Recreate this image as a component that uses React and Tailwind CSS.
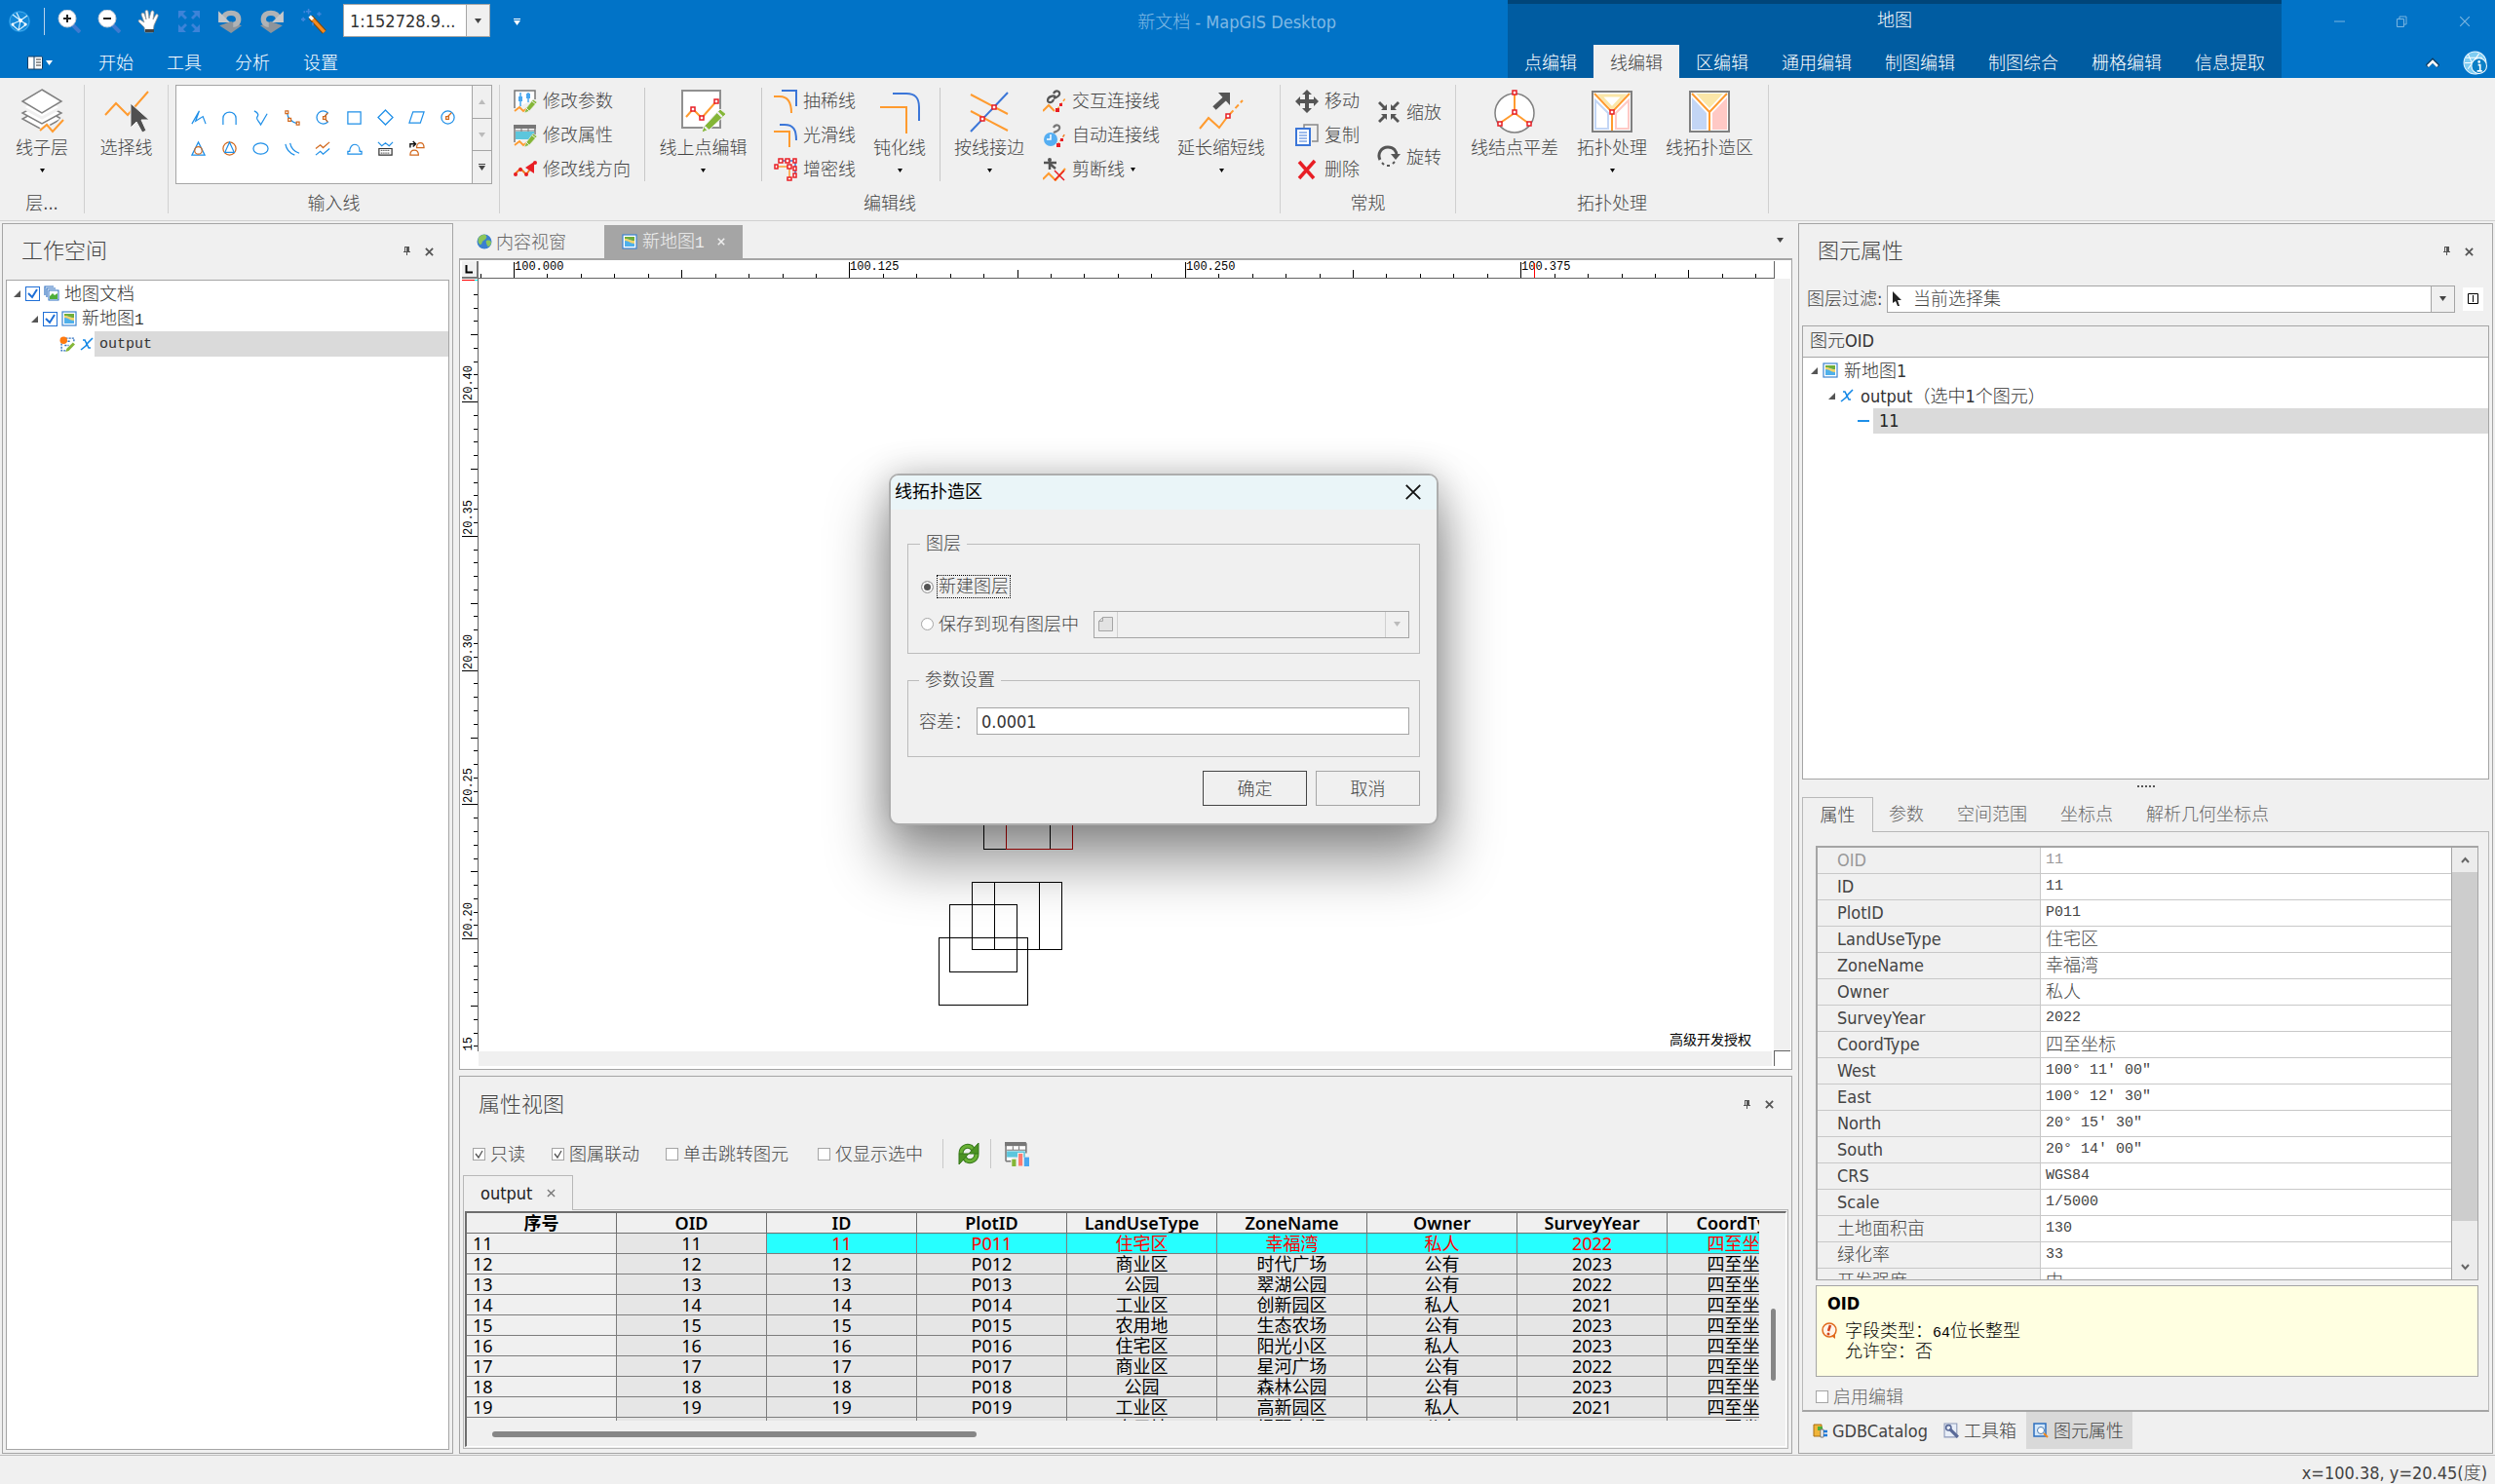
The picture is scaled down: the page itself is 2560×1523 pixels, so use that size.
import React from "react";

const TICK_X = Array.from({ length: 60 }, (_, i) => i - 1);
const TICK_Y = Array.from({ length: 70 }, (_, i) => i - 8);

/* ---------- small shared pieces ---------- */

function Svg({ size = 24, box = 24, className = "", children }) {
  return (
    <svg
      width={size}
      height={size}
      viewBox={`0 0 ${box} ${box}`}
      fill="none"
      className={"shrink-0 " + className}
      aria-hidden="true"
    >
      {children}
    </svg>
  );
}

function Down({ className = "text-[#444]" }) {
  return (
    <svg width="7" height="5" viewBox="0 0 7 5" className={"shrink-0 " + className} aria-hidden="true">
      <path d="M0 0h7L3.500 5z" fill="currentColor" />
    </svg>
  );
}

function Tiny() {
  return (
    <svg width="5" height="4" viewBox="0 0 5 4" className="shrink-0" aria-hidden="true">
      <path d="M0 0h5L2.500 4z" fill="#000" />
    </svg>
  );
}

function Pin() {
  return (
    <svg width="7" height="10" viewBox="0 0 7 10" aria-hidden="true">
      <path d="M1 0h5v5h1v1H0V5h1zM3 6h1v3H3z" fill="#555" />
      <path d="M2 1h1v4H2z" fill="#f0f0f0" />
    </svg>
  );
}

function Cross({ size = 9, color = "#555", width = 2 }) {
  return (
    <svg width={size} height={size} viewBox="0 0 10 10" aria-hidden="true">
      <path d="M1 1l8 8M9 1l-8 8" stroke={color} strokeWidth={width} />
    </svg>
  );
}

function PanelHeader({ title, className }) {
  return (
    <div className={"flex shrink-0 items-center text-[#444] " + className}>
      <h2 className="flex-1 text-[22px] leading-7">{title}</h2>
      <button className="mr-[15px]" aria-label="固定">
        <Pin />
      </button>
      <button aria-label="关闭">
        <Cross />
      </button>
    </div>
  );
}

/* ---------- icon drawings ---------- */

const orange = "#ff9b2f";
const blue = "#1e8fe8";
const grey = "#555";

function Pencil({ x = 12, y = 9 }) {
  return (
    <g transform={`translate(${x} ${y})`}>
      <path d="M-1 15l2-5 7-9 4 3-8 9z" fill="#84b637" stroke="#f0f0f0" strokeWidth=".6" />
      <path d="M7 3l4 3M1 10l3 3" stroke="#f0f0f0" strokeWidth="1" />
    </g>
  );
}

const I = {
  globe: (
    <Svg size={24}>
      <circle cx="12" cy="12" r="11" fill="#1488d8" />
      <circle cx="12" cy="12" r="10" stroke="#3fa9ec" />
      <path d="M5 5l8 6 7-5M13 11l-2 10M13 11L4 15M4 15l7 6 8-6-6-4M9 3l4 8" stroke="#d9f1ff" strokeWidth="1.2" />
      <circle cx="13" cy="11" r="2" fill="#fff" />
      <circle cx="5" cy="15" r="1.5" fill="#fff" />
      <circle cx="18" cy="15" r="1.5" fill="#fff" />
    </Svg>
  ),
  zoomIn: (
    <Svg>
      <path d="M15 15l8 8" stroke="#3f7bd0" strokeWidth="4" />
      <circle cx="10" cy="9" r="9" fill="#fff" stroke="#bcc7d4" />
      <path d="M6 9h8M10 5v8" stroke="#222" strokeWidth="2" />
    </Svg>
  ),
  zoomOut: (
    <Svg>
      <path d="M15 15l8 8" stroke="#3f7bd0" strokeWidth="4" />
      <circle cx="10" cy="9" r="9" fill="#fff" stroke="#bcc7d4" />
      <path d="M6 9h8" stroke="#222" strokeWidth="2" />
    </Svg>
  ),
  hand: (
    <Svg>
      <path
        d="M8 23l-1-5-6-6c0-2 2-2 3-1l3 2-3-8c0-2 2-2 3-1l2 6-1-8c0-2 3-2 3 0l1 7 2-7c1-2 3-1 3 1l-1 7 3-5c1-1 3 0 2 2l-4 9-1 7z"
        fill="#fff"
        stroke="#999"
        strokeWidth=".8"
      />
      <path d="M8 23h9v-3H8z" fill="#444" />
    </Svg>
  ),
  expand: (
    <Svg>
      <path
        d="M1 1h8L6 4l4 4-2 2-4-4-3 3zM23 1v8l-3-3-4 4-2-2 4-4-3-3zM1 23v-8l3 3 4-4 2 2-4 4 3 3zM23 23h-8l3-3-4-4 2-2 4 4 3-3z"
        fill="#3d83d8"
      />
    </Svg>
  ),
  undo: (
    <Svg size={26}>
      <path d="M2 16l11-4 10 4-10 7z" fill="#8d949b" />
      <path d="M6 10c0-4 3-6 7-6s7 2 7 6-3 5-5 5" stroke="#b0b3b6" strokeWidth="5" />
      <path d="M1 2v11h11z" fill="#c4c7ca" />
    </Svg>
  ),
  redo: (
    <Svg size={26}>
      <path d="M1 16l10-4 11 4-11 7z" fill="#8d949b" />
      <path d="M18 10c0-4-3-6-7-6S4 6 4 10s3 5 5 5" stroke="#b0b3b6" strokeWidth="5" />
      <path d="M23 2v11H12z" fill="#c4c7ca" />
    </Svg>
  ),
  wand: (
    <Svg size={26}>
      <path d="M9 8l13 14" stroke="#7a4a10" strokeWidth="5" />
      <path d="M9 8l13 14" stroke="#f58a1f" strokeWidth="3" />
      <path d="M8 7l3 3" stroke="#fff" strokeWidth="3" />
      <path d="M7 0v5M4.500 2.500h5M2 8v4M0 10h4M17 3v4M15 5h4M3 2v2M11 13v3" stroke="#3f86dd" strokeWidth="1.500" />
    </Svg>
  ),
  appMenu: (
    <Svg size={16} box={16}>
      <rect x="0.500" y="2" width="15" height="13" rx="1" fill="#fff" stroke="#123e66" />
      <path d="M7 2v13" stroke="#123e66" />
      <path d="M9 5h5M9 8h5M9 11h5" stroke="#333" />
    </Svg>
  ),
  info: (
    <Svg size={25}>
      <circle cx="12" cy="12" r="11" fill="#7fcdf2" stroke="#e8f7ff" />
      <path d="M3 7h16M2 12h10M5 3l8 18M16 3L5 18" stroke="#fff" strokeWidth="1" />
      <circle cx="16" cy="15" r="7.500" fill="#0b7fc6" stroke="#fff" />
      <path d="M15 14h2v6M14 20h5" stroke="#fff" strokeWidth="1.600" />
      <circle cx="16" cy="11" r="1.300" fill="#fff" />
    </Svg>
  ),
  layers: (
    <Svg size={46} box={46}>
      <path d="M23 20l20 11-20 11L3 31z" fill="#fff" stroke="#808080" strokeWidth="1.500" />
      <path d="M23 14l20 11-20 11L3 25z" fill="#fff" stroke="#808080" strokeWidth="1.500" />
      <path d="M23 8l20 11-20 11L3 19z" fill="#fff" stroke="#f0f0f0" strokeWidth="3" />
      <path d="M23 1l20 12-20 12L3 13z" fill="#fff" stroke="#808080" strokeWidth="1.500" />
      <path d="M20 45l8-7 6 5 11-12" stroke="#f0f0f0" strokeWidth="5" />
      <path d="M21 43l7-6 6 7 11-12" stroke={orange} strokeWidth="2" />
    </Svg>
  ),
  selectLine: (
    <Svg size={46} box={46}>
      <path d="M1 27l11-12 12 12L45 3" stroke={orange} strokeWidth="2" />
      <path d="M27 15v25l6-6 6 11 4-2-5-11h8z" fill="#505050" stroke="#f0f0f0" />
    </Svg>
  ),
  params: (
    <Svg>
      <path d="M1 19V1h21v9" stroke="#777" strokeWidth="1.500" fill="#fff" />
      <path d="M7 3v14M15 3v10" stroke="#4aa8f0" strokeWidth="1.500" />
      <path d="M5 7h4v5H5zM13 4h4v5h-4z" fill="#4aa8f0" />
      <path d="M1 22l5-4 4 4 4-3" stroke={orange} strokeWidth="1.800" />
      <Pencil x={12} y={9} />
    </Svg>
  ),
  attrs: (
    <Svg>
      <path d="M1 19V2h21v9" stroke="#777" strokeWidth="1.500" fill="#fff" />
      <path d="M0 1h23v4H0z" fill="#777" />
      <path d="M2 8h19v8H2z" fill="#5cc6dc" />
      <path d="M2 7h20M8 5v3M15 5v3" stroke="#777" />
      <path d="M1 22l5-4 4 4 4-3" stroke={orange} strokeWidth="1.800" />
      <Pencil x={12} y={9} />
    </Svg>
  ),
  direction: (
    <Svg>
      <path d="M1 17l6-6 6 6 8-11" stroke="#f07a20" strokeWidth="2" />
      <path d="M21 4v12l-9-6z" fill="#e81e25" />
      <circle cx="2" cy="17" r="2" fill="#e81e25" />
      <circle cx="7" cy="12" r="2" fill="#e81e25" />
      <circle cx="13" cy="17" r="2" fill="#e81e25" />
      <circle cx="22" cy="5" r="2" fill="#e81e25" />
    </Svg>
  ),
  pointEdit: (
    <Svg size={46} box={46}>
      <rect x="1" y="2" width="39" height="38" fill="#fff" stroke="#909090" strokeWidth="2" />
      <path d="M5 29l7-8 9 9 15-17" stroke={orange} strokeWidth="2" />
      <g fill="#fff" stroke="#e81e25" strokeWidth="1.500">
        <rect x="10" y="19" width="4" height="4" />
        <rect x="19" y="28" width="4" height="4" />
        <rect x="34" y="11" width="4" height="4" />
      </g>
      <path d="M21 45l2-6L40 21l6 5-17 16z" fill="#84b637" stroke="#f0f0f0" />
      <path d="M37 24l5 5M24 39l4 4" stroke="#f0f0f0" strokeWidth="2" />
    </Svg>
  ),
  thin: (
    <Svg>
      <path d="M8 1h15v16" stroke="#3b76d8" strokeWidth="2" />
      <path d="M0 7h6c8 0 12 5 12 17" stroke={orange} strokeWidth="2" />
    </Svg>
  ),
  smooth: (
    <Svg>
      <path d="M6 1h5c9 0 12 5 12 16" stroke="#3b76d8" strokeWidth="2" />
      <path d="M0 8h16v16" stroke={orange} strokeWidth="2" />
    </Svg>
  ),
  dense: (
    <Svg>
      <path d="M7 3h15v15" stroke="#3b76d8" strokeWidth="1.500" />
      <path d="M2 9h14v13" stroke={orange} strokeWidth="1.500" />
      <g fill="#fff" stroke="#e81e25" strokeWidth="1.500">
        <rect x="5" y="1" width="4" height="4" />
        <rect x="12" y="1" width="4" height="4" />
        <rect x="20" y="1" width="3" height="4" />
        <rect x="1" y="7" width="3" height="4" />
        <rect x="14" y="7" width="4" height="4" />
        <rect x="20" y="9" width="3" height="4" />
        <rect x="20" y="16" width="3" height="4" />
        <rect x="14" y="20" width="4" height="3" />
      </g>
    </Svg>
  ),
  blunt: (
    <Svg size={46} box={46}>
      <path d="M16 5h14c9 0 13 4 13 14v14" stroke="#3b76d8" strokeWidth="2" />
      <path d="M3 19h27v27" stroke={orange} strokeWidth="2" />
    </Svg>
  ),
  joinEdge: (
    <Svg size={46} box={46}>
      <path d="M42 4L4 44" stroke="#3b76d8" strokeWidth="2" />
      <path d="M4 6l38 20M4 23l38 20" stroke={orange} strokeWidth="2" />
      <g fill="#fff" stroke="#e81e25" strokeWidth="1.500">
        <rect x="26" y="17" width="4" height="4" />
        <rect x="14" y="29" width="4" height="4" />
      </g>
    </Svg>
  ),
  linkInteractive: (
    <Svg>
      <path d="M11 4c2-4 7-3 6 1-1 3-4 3-6 4M13 8c-1-3-8-1-8 3 0 3 5 3 6-1" stroke={grey} strokeWidth="2.200" />
      <path d="M0 22l6-6 6 6" stroke={orange} strokeWidth="2" />
      <path d="M15 20l8-11" stroke={orange} strokeWidth="1.500" strokeDasharray="3 2" />
      <path d="M13 19h4v4h-4zM17 14h3v3h-3z" fill="#e81e25" />
    </Svg>
  ),
  linkAuto: (
    <Svg>
      <path d="M11 4c2-4 7-3 6 1-1 3-4 3-6 4" stroke="#777" strokeWidth="2.200" />
      <circle cx="8" cy="16" r="7" fill="#55aef2" />
      <path d="M8 11v5H4" stroke="#fff" strokeWidth="1.500" />
      <path d="M15 22l8-12" stroke="#f07a20" strokeWidth="1.500" strokeDasharray="3 2" />
      <path d="M14 20h4v4h-4zM18 15h3v3h-3z" fill="#e81e25" />
    </Svg>
  ),
  cut: (
    <Svg>
      <path d="M7 2v10M1 5h13M7 6l6 5" stroke={grey} strokeWidth="2.500" />
      <circle cx="7" cy="2" r="2" fill={grey} />
      <path d="M0 22l6-6 7 7 10-12" stroke={orange} strokeWidth="2" />
      <path d="M12 13l10 10M22 13L12 23" stroke="#e81e25" strokeWidth="1.500" />
    </Svg>
  ),
  extend: (
    <Svg size={46} box={46}>
      <path d="M16 20L28 9" stroke={grey} strokeWidth="5" />
      <path d="M20 4h12v13z" fill={grey} />
      <path d="M1 41l9-11 11 10 9-12" stroke={orange} strokeWidth="2" />
      <path d="M32 26l13-14" stroke={orange} strokeWidth="2" strokeDasharray="5 3" />
      <rect x="28" y="26" width="4" height="4" fill="#fff" stroke="#e81e25" strokeWidth="1.500" />
    </Svg>
  ),
  move: (
    <Svg>
      <path d="M12 0l5 5h-3v5h5V7l5 5-5 5v-3h-5v5h3l-5 5-5-5h3v-5H5v3l-5-5 5-5v3h5V5H7z" fill={grey} />
    </Svg>
  ),
  copy: (
    <Svg>
      <path d="M9 5V1h14v17h-6" stroke="#888" strokeWidth="1.500" />
      <path d="M1 5h14v17H1z" fill="#fff" stroke="#3b76d8" strokeWidth="2" />
      <path d="M4 9h8M4 12h8M4 15h8M4 18h8" stroke="#3b76d8" />
    </Svg>
  ),
  del: (
    <Svg>
      <path d="M4 4l15 17M20 3L4 21" stroke="#e81e25" strokeWidth="3.500" />
    </Svg>
  ),
  shrink: (
    <Svg>
      <path
        d="M1 3l2-2 5 5 2-2v6H4l2-2zM23 3l-2-2-5 5-2-2v6h6l-2-2zM1 21l2 2 5-5 2 2v-6H4l2 2zM23 21l-2 2-5-5-2 2v-6h6l-2 2z"
        fill={grey}
      />
    </Svg>
  ),
  rotate: (
    <Svg>
      <path d="M3 15C0 9 4 2 11 2c6 0 9 4 9 9" stroke={grey} strokeWidth="3" />
      <path d="M14 9h10l-5 6z" fill={grey} />
      <path d="M5 18l2 2M10 21h3M16 19l2-2" stroke={grey} strokeWidth="2" />
    </Svg>
  ),
  nodeAdjust: (
    <Svg size={46} box={46}>
      <circle cx="23" cy="25" r="20" fill="#fff" stroke="#808080" strokeWidth="1.500" />
      <path d="M23 5v20L7 36M23 25l15 11" stroke={orange} strokeWidth="2" />
      <g fill="#fff" stroke="#e81e25" strokeWidth="1.500">
        <rect x="21" y="2" width="4" height="4" />
        <rect x="21" y="22" width="4" height="4" />
        <rect x="6" y="34" width="4" height="4" />
        <rect x="36" y="34" width="4" height="4" />
      </g>
    </Svg>
  ),
  topo: (
    <Svg size={46} box={46}>
      <rect x="3" y="3" width="40" height="41" fill="#fff" stroke="#808080" strokeWidth="2" />
      <path d="M11 7h24L23 20z" stroke="#fbe7a8" strokeWidth="3" />
      <path d="M40 12v29H27V25z" stroke="#ffc9c5" strokeWidth="2" />
      <path d="M6 12v29h13V25z" stroke="#c3d6f5" strokeWidth="2" />
      <path d="M5 5l18 19L41 5M23 24v19" stroke={orange} strokeWidth="2" />
      <rect x="21" y="22" width="4" height="4" fill="#fff" stroke="#e81e25" strokeWidth="1.500" />
    </Svg>
  ),
  topoArea: (
    <Svg size={46} box={46}>
      <rect x="3" y="3" width="40" height="41" fill="#fff" stroke="#808080" strokeWidth="2" />
      <path d="M9 5h28L23 20z" fill="#fbe7a8" />
      <path d="M5 9v33h15V25z" fill="#c3d6f5" />
      <path d="M41 9v33H26V25z" fill="#ffc9c5" />
      <path d="M5 5l18 19L41 5M23 24v19" stroke={orange} strokeWidth="2" />
    </Svg>
  ),
  map: (
    <Svg size={16} box={16}>
      <rect x="1" y="1" width="14" height="14" fill="#fff" stroke="#3d84d0" strokeWidth="1.200" />
      <path d="M3 3h10v10H3z" fill="#4fb0ea" />
      <path d="M3 3h10v4C9 7 8 5 3 5z" fill="#6fae3a" />
      <path d="M3 5c5 0 5 2 10 2v3C8 10 8 7 3 7z" fill="#f2d36b" />
    </Svg>
  ),
  mapDoc: (
    <Svg size={16} box={16}>
      <path d="M1 10V1h9M3 12V3h9" stroke="#2d6fc0" strokeWidth="1.200" />
      <rect x="5" y="5" width="10" height="10" fill="#fff" stroke="#2d6fc0" />
      <path d="M6 14v-3l3-3 2 2 3-2v6z" fill="#4fae3a" />
    </Svg>
  ),
  line: (
    <Svg size={14} box={14}>
      <path d="M13 1L8 6l-2 3-5 4M3 3h2l2 4 2 4h2" stroke="#1287e6" strokeWidth="1.600" />
    </Svg>
  ),
  editing: (
    <Svg size={17} box={16}>
      <path d="M6 2h8v4M2 7v7h5M5 5h5M5 9h4" stroke="#2d6fc0" strokeWidth="1.300" strokeDasharray="2 1" />
      <circle cx="4" cy="4" r="3.500" fill="#ff7a10" />
      <path d="M6 15l1-3 6-6 2 2-6 6z" fill="#84b637" />
    </Svg>
  ),
  earth: (
    <Svg size={16} box={16}>
      <circle cx="8" cy="8" r="7.500" fill="#3a7fd0" />
      <path d="M2 4c3-4 7-4 8-2s-1 4-3 5-1 4-3 4S1 7 2 4zM10 7c3-1 5 0 5 2s-2 4-3 4-3-5-2-6z" fill="#8cc65a" />
    </Svg>
  ),
};

/* Drawings in the line-input gallery */
const o = "#d2691e";
const GALLERY = [
  <path d="M1 15L9 1 5 12l8-5 3 8" stroke={blue} />,
  <path d="M1 16V9c0-9 14-9 14 0v7" stroke={blue} />,
  <path d="M1 1c6 3 4 5 3 7s2 4 4 8l7-12" stroke={blue} />,
  <g>
    <path d="M3 3c0 6 4 10 12 12" stroke={blue} />
    <path d="M1 1h3v3H1zM4 9h3v3H4zM13 13h3v3h-3z" fill="#fff" stroke={o} />
  </g>,
  <g>
    <path d="M13 3a7 7 0 1 0 0 10L9 8z" stroke={blue} />
    <path d="M13 3L9 8l4 5" stroke={o} />
    <path d="M8 7h3v3H8z" fill="#fff" stroke={o} />
  </g>,
  <path d="M1 2h14v13H1z" stroke={blue} />,
  <path d="M8 0l8 8-8 8-8-8z" stroke={blue} />,
  <path d="M4 2h12l-4 12H0z" stroke={blue} />,
  <g>
    <circle cx="8" cy="8" r="7" stroke={blue} />
    <path d="M7 8l5-5" stroke={o} />
    <path d="M6 7h3v3H6z" fill="#fff" stroke={o} />
  </g>,
  <g>
    <path d="M8 1l7 14H1z" stroke={blue} />
    <circle cx="8" cy="10" r="4" stroke={o} />
  </g>,
  <g>
    <circle cx="8" cy="8" r="7" stroke={o} />
    <path d="M8 1l5 11H3z" stroke={blue} />
  </g>,
  <ellipse cx="8" cy="8" rx="8" ry="6" stroke={blue} />,
  <path d="M1 3c1 6 5 10 10 12M6 2c1 5 4 9 10 11" stroke={blue} />,
  <g>
    <path d="M0 8l5-4 3 3 7-6" stroke={o} />
    <path d="M0 15l5-4 3 3 7-6" stroke={blue} />
  </g>,
  <path d="M1 14v-3h2c0-10 11-10 11 0h2v3z" stroke={blue} />,
  <g>
    <path d="M0 1l4 4 4-3 4 3 4-4" stroke={blue} />
    <path d="M1 8h14v7H1z" stroke="#333" />
    <path d="M3 10h10M3 13h10" stroke="#333" strokeDasharray="1 1" />
  </g>,
  <g>
    <path d="M1 7V3h5M4 0l3 3-3 3" stroke="#111" strokeWidth="1.500" />
    <path d="M8 7c0-7 8-7 8 0zM1 15c0-7 9-7 9 0z" stroke={o} />
  </g>,
];

/* ---------- ribbon ---------- */

function Big({ icon, label, width, arrow = false }) {
  return (
    <button className={"flex h-[105px] shrink-0 flex-col items-center pt-1 " + width}>
      {icon}
      <span className="whitespace-nowrap leading-[30px]">{label}</span>
      {arrow && (
        <span className="pt-[6px]">
          <Tiny />
        </span>
      )}
    </button>
  );
}

function Small({ icon, label, height = "h-[35px]", arrow = false }) {
  return (
    <button className={"flex items-center gap-[6px] whitespace-nowrap pb-[2px] " + height}>
      {icon}
      <span>{label}</span>
      {arrow && <Tiny />}
    </button>
  );
}

function Group({ label, width, children }) {
  return (
    <section className={"flex h-[132px] shrink-0 flex-col border-r border-[#d0d0d0] " + width}>
      <div className="flex h-[113px]">{children}</div>
      <div className="text-center leading-5">{label}</div>
    </section>
  );
}

function Sep() {
  return <div className="mt-[3px] h-24 w-px shrink-0 bg-[#c8c8c8]" />;
}

function Ribbon() {
  return (
    <div className="flex h-[147px] shrink-0 overflow-hidden border-b border-[#d0d0d0] pt-[7px] text-[18px] text-[#444]">
      <Group label="层..." width="w-[87px]">
        <Big icon={I.layers} label="线子层" width="w-[86px]" arrow />
      </Group>
      <Group label="" width="w-[86px]">
        <Big icon={I.selectLine} label="选择线" width="w-[85px]" />
      </Group>
      <Group label="输入线" width="w-[340px]">
        <div className="ml-[7px] flex h-[102px] w-[325px] border border-[#a5a5a5] bg-white">
          <div className="grid flex-1 grid-cols-9 grid-rows-2 pb-5 pl-[6px] pr-[9px] pt-4">
            {GALLERY.map((g, i) => (
              <button key={i} className="flex items-center justify-center">
                <svg width="17" height="17" viewBox="-1 -1 18 18" fill="none" strokeWidth="1.3" aria-hidden="true">
                  {g}
                </svg>
              </button>
            ))}
          </div>
          <div className="flex w-5 flex-col border-l border-[#a5a5a5] bg-[#f0f0f0]">
            <button className="flex flex-1 items-center justify-center border-b border-[#a5a5a5]" aria-label="上一行">
              <Down className="rotate-180 text-[#bbb]" />
            </button>
            <button className="flex flex-1 items-center justify-center border-b border-[#a5a5a5]" aria-label="下一行">
              <Down className="text-[#bbb]" />
            </button>
            <button className="flex flex-1 flex-col items-center justify-center gap-px" aria-label="展开">
              <span className="h-px w-[7px] bg-[#444]" />
              <Down />
            </button>
          </div>
        </div>
      </Group>
      <Group label="编辑线" width="w-[801px]">
        <div className="flex w-[148px] shrink-0 flex-col pl-[14px]">
          <Small icon={I.params} label="修改参数" />
          <Small icon={I.attrs} label="修改属性" />
          <Small icon={I.direction} label="修改线方向" />
        </div>
        <Sep />
        <Big icon={I.pointEdit} label="线上点编辑" width="w-[119px]" arrow />
        <Sep />
        <div className="flex w-[100px] shrink-0 flex-col pl-3">
          <Small icon={I.thin} label="抽稀线" />
          <Small icon={I.smooth} label="光滑线" />
          <Small icon={I.dense} label="增密线" />
        </div>
        <Big icon={I.blunt} label="钝化线" width="w-[82px]" arrow />
        <Sep />
        <Big icon={I.joinEdge} label="按线接边" width="w-[100px]" arrow />
        <div className="flex w-[133px] shrink-0 flex-col pl-[5px]">
          <Small icon={I.linkInteractive} label="交互连接线" />
          <Small icon={I.linkAuto} label="自动连接线" />
          <Small icon={I.cut} label="剪断线" arrow />
        </div>
        <Big icon={I.extend} label="延长缩短线" width="w-[110px]" arrow />
      </Group>
      <Group label="常规" width="w-[180px]">
        <div className="flex w-[90px] flex-col pl-[15px]">
          <Small icon={I.move} label="移动" />
          <Small icon={I.copy} label="复制" />
          <Small icon={I.del} label="删除" />
        </div>
        <div className="flex flex-col pl-[9px] pt-[6px]">
          <Small icon={I.shrink} label="缩放" height="h-[46px]" />
          <Small icon={I.rotate} label="旋转" height="h-[46px]" />
        </div>
      </Group>
      <Group label="拓扑处理" width="w-[321px]">
        <Big icon={I.nodeAdjust} label="线结点平差" width="w-[120px]" />
        <Big icon={I.topo} label="拓扑处理" width="w-[80px]" arrow />
        <Big icon={I.topoArea} label="线拓扑造区" width="w-[120px]" />
      </Group>
    </div>
  );
}

/* ---------- title bar ---------- */

function TitleBar() {
  return (
    <header className="flex h-20 shrink-0 bg-[#0173c7] text-[18px] text-white">
      <div className="flex min-w-0 flex-1 flex-col">
        <div className="flex h-[46px] items-center pb-[2px] pl-2">
          {I.globe}
          <span className="ml-[13px] mr-[13px] h-7 w-px bg-[#b8d4ec]" />
          <div className="flex items-center gap-[17px]">
            {["zoomIn", "zoomOut", "hand", "expand", "undo", "redo", "wand"].map((k) => (
              <button key={k} aria-label={k}>
                {I[k]}
              </button>
            ))}
          </div>
          <div className="mb-[2px] ml-[17px] flex h-[34px] w-[151px] border border-[#a5a5a5] bg-white text-[#333]">
            <input
              aria-label="比例尺"
              defaultValue="1:152728.9..."
              className="w-0 flex-1 pl-[6px] outline-none"
            />
            <button
              className="flex w-6 items-center justify-center border-l border-[#a5a5a5] bg-[#f0f0f0]"
              aria-label="选择比例尺"
            >
              <Down />
            </button>
          </div>
          <button className="ml-6 flex flex-col items-center gap-px" aria-label="自定义快速访问">
            <span className="h-px w-[7px] bg-white" />
            <Down className="text-white" />
          </button>
          <div className="ml-auto pr-[176px] text-[#80b9e4]">新文档 - MapGIS Desktop</div>
        </div>
        <nav className="flex h-[34px] items-center pt-[2px]">
          <button className="ml-[28px] mr-[47px] flex items-center gap-[3px]" aria-label="菜单">
            {I.appMenu}
            <Down className="text-white" />
          </button>
          {["开始", "工具", "分析", "设置"].map((t) => (
            <button key={t} className="w-[70px] text-left">
              {t}
            </button>
          ))}
        </nav>
      </div>
      <div className="shrink-0 border-t-4 border-[#004579] bg-[#005ca1]">
        <div className="h-[42px] text-center leading-[34px]">地图</div>
        <nav className="flex h-[34px]">
          {["点编辑", "线编辑", "区编辑", "通用编辑", "制图编辑", "制图综合", "栅格编辑", "信息提取"].map((t) => (
            <button
              key={t}
              className={t === "线编辑" ? "bg-[#f0f0f0] px-[17px] pt-[2px] text-[#444]" : "px-[17px] pt-[2px]"}
            >
              {t}
            </button>
          ))}
        </nav>
      </div>
      <div className="w-[219px] shrink-0">
        <div className="flex h-11 items-center justify-end gap-[52px] pr-[25px]">
          <button aria-label="最小化">
            <svg width="12" height="12" aria-hidden="true">
              <path d="M0 6h11" stroke="#7ab5e0" />
            </svg>
          </button>
          <button aria-label="还原">
            <svg width="12" height="12" fill="none" aria-hidden="true">
              <path d="M0.500 3.500h7v8h-7zM3 3V1h7v8H8" stroke="#7ab5e0" />
            </svg>
          </button>
          <button aria-label="关闭窗口">
            <Cross size={12} color="#7ab5e0" width={1} />
          </button>
        </div>
        <div className="flex h-9 items-center justify-end gap-6 pr-2 pt-1">
          <button aria-label="折叠功能区">
            <svg width="14" height="11" viewBox="0 0 14 11" fill="none" aria-hidden="true">
              <path d="M1 9l6-6 6 6" stroke="#0b3a60" strokeWidth="4" />
              <path d="M2 9l5-5 5 5" stroke="#fff" strokeWidth="2.500" />
            </svg>
          </button>
          <button aria-label="关于">{I.info}</button>
        </div>
      </div>
    </header>
  );
}

/* ---------- workspace ---------- */

function Twisty() {
  return (
    <svg width="7" height="7" className="shrink-0" aria-hidden="true">
      <path d="M7 0v7H0z" fill="#555" />
    </svg>
  );
}

function BlueCheck({ label }) {
  return (
    <span className="relative flex h-[15px] w-[15px] shrink-0">
      <input
        type="checkbox"
        defaultChecked
        aria-label={label}
        className="h-[15px] w-[15px] appearance-none border border-[#1f6fd6] bg-white"
      />
      <svg width="15" height="15" fill="none" className="pointer-events-none absolute" aria-hidden="true">
        <path d="M3 7l4 4 5-8" stroke="#1f6fd6" strokeWidth="2" />
      </svg>
    </span>
  );
}

const mono = "font-['Liberation_Mono','Noto_Sans_CJK_SC',monospace]";

function Workspace() {
  return (
    <aside className="flex w-[463px] shrink-0 flex-col border border-[#a5a5a5] px-[3px] pb-[3px]">
      <PanelHeader title="工作空间" className="h-[57px] pb-px pl-4 pr-4" />
      <div className="flex-1 border border-[#a5a5a5] bg-white text-[18px] text-[#333]">
        <div className="flex h-[26px] items-center pl-[7px]">
          <Twisty />
          <span className="ml-[5px] flex items-center gap-[4px]">
            <BlueCheck label="地图文档" />
            {I.mapDoc}
          </span>
          <span className="ml-[5px]">地图文档</span>
        </div>
        <div className="flex h-[26px] items-center pl-[25px]">
          <Twisty />
          <span className="ml-[5px] flex items-center gap-[4px]">
            <BlueCheck label="新地图1" />
            {I.map}
          </span>
          <span className="ml-[5px]">
            新地图<span className={"text-[16px] " + mono}>1</span>
          </span>
        </div>
        <div className="flex h-[26px] items-center pl-[54px]">
          {I.editing}
          <span className="ml-1">{I.line}</span>
          <span className={"ml-px flex-1 self-stretch bg-[#dadada] pl-[5px] text-[15px] leading-[28px] " + mono}>
            output
          </span>
        </div>
      </div>
    </aside>
  );
}

/* ---------- map ---------- */

function TopRuler() {
  return (
    <svg className="h-[19px] w-full" aria-hidden="true">
      <path d="M0 18.500h3000" stroke="#646464" />
      {TICK_X.map((i) => {
        const x = Math.round(36 + i * 34.44);
        const y = i % 10 === 0 ? 2 : i % 5 === 0 ? 10 : 14;
        return <rect key={i} x={x} y={y} width="1" height={18 - y} fill="#000" />;
      })}
      {["100.000", "100.125", "100.250", "100.375"].map((t, k) => (
        <text key={t} x={Math.round(37 + k * 344.4)} y="10" fontSize="12" fontFamily="Liberation Mono, monospace">
          {t}
        </text>
      ))}
      <rect x="1083" y="3" width="1" height="15" fill="#f00" />
    </svg>
  );
}

function LeftRuler() {
  return (
    <svg className="absolute inset-0 h-full w-[19px]" aria-hidden="true">
      <path d="M18.500 0v3000" stroke="#646464" />
      {TICK_Y.map((i) => {
        const y = Math.round(126 + i * 13.78);
        const x = i % 10 === 0 ? 2 : i % 5 === 0 ? 11 : 14;
        return y > 8 ? <rect key={i} x={x} y={y} width={18 - x} height="1" fill="#000" /> : null;
      })}
      {["20.40", "20.35", "20.30", "20.25", "20.20", "20.15"].map((t, k) => {
        const y = Math.round(125 + k * 137.8);
        return (
          <text
            key={t}
            x="12"
            y={y}
            fontSize="12"
            fontFamily="Liberation Mono, monospace"
            transform={`rotate(-90 12 ${y})`}
          >
            {t}
          </text>
        );
      })}
      <path d="M2 1.500h13" stroke="#f00" />
      <path d="M15 1.500h3" stroke="#0ff" />
    </svg>
  );
}

function MapView() {
  return (
    <section className="flex min-h-0 flex-1 flex-col">
      <div className="flex h-[34px] shrink-0 items-stretch text-[18px] text-[#666]">
        <button className="flex w-[149px] items-center gap-1 pl-[18px]">
          {I.earth}
          内容视窗
        </button>
        <div className="flex w-[142px] items-center bg-[#a5a5a5] pl-[18px] text-[#f0f0f0]">
          <button className="flex flex-1 items-center gap-[5px]">
            {I.map}
            <span>
              新地图<span className={"text-[16px] " + mono}>1</span>
            </span>
          </button>
          <button className="mr-[18px]" aria-label="关闭新地图1">
            <Cross size={8} color="#eee" width={2} />
          </button>
        </div>
        <button className="ml-auto mr-[9px] pb-1" aria-label="窗口列表">
          <Down />
        </button>
      </div>
      <div className="grid min-h-0 flex-1 grid-cols-[19px_minmax(0,1fr)_18px] grid-rows-[19px_minmax(0,1fr)_18px] border border-t-2 border-[#a5a5a5] bg-white">
        <div className="ml-[2px] mt-px border-b-2 border-r-2 border-[#777] bg-[#f0f0f0]">
          <svg width="14" height="15" fill="none" aria-hidden="true">
            <path d="M4.500 4v7.500H11" stroke="#000" strokeWidth="2" />
          </svg>
        </div>
        <TopRuler />
        <div className="mt-px border-l border-[#646464]" />
        <div className="relative overflow-hidden">
          <LeftRuler />
        </div>
        <div className="relative flex items-end justify-end overflow-hidden">
          <svg className="absolute inset-0 h-full w-full" fill="none" strokeWidth="1" shapeRendering="crispEdges">
            <path d="M518.500 500V585.500H542M586.500 500V585" stroke="#000" />
            <path d="M541.500 500V585.500H609.500V500" stroke="#c00000" />
            <path d="M506.500 619.500h92v69h-92zM529.500 619v69M575.500 619v69" stroke="#000" />
            <path d="M483.500 642.500h69v69h-69zM472.500 676.500h91v69h-91z" stroke="#000" />
          </svg>
          <div className="pb-[2px] pr-[23px] text-[14px] font-normal leading-5 text-black">高级开发授权</div>
        </div>
        <div className="mr-px flex flex-col border-b border-[#646464] bg-[#f0f0f0]" />
        <div />
        <div className="mb-[3px] mr-[2px] bg-[#f0f0f0]" />
        <div className="mb-[3px] border-l border-[#646464]" />
      </div>
    </section>
  );
}

/* ---------- attribute table ---------- */

const COLS = ["序号", "OID", "ID", "PlotID", "LandUseType", "ZoneName", "Owner", "SurveyYear", "CoordType"];
const ROWS = [
  [11, "住宅区", "幸福湾", "私人", 2022],
  [12, "商业区", "时代广场", "公有", 2023],
  [13, "公园", "翠湖公园", "公有", 2022],
  [14, "工业区", "创新园区", "私人", 2021],
  [15, "农用地", "生态农场", "公有", 2023],
  [16, "住宅区", "阳光小区", "私人", 2023],
  [17, "商业区", "星河广场", "公有", 2022],
  [18, "公园", "森林公园", "公有", 2023],
  [19, "工业区", "高新园区", "私人", 2021],
  [20, "农用地", "绿野农场", "公有", 2022],
];

function Check({ label, checked = false }) {
  return (
    <label className="flex items-center gap-[5px] whitespace-nowrap">
      <span className="relative flex h-[13px] w-[13px]">
        <input
          type="checkbox"
          defaultChecked={checked}
          className="h-[13px] w-[13px] appearance-none border border-[#a5a5a5] bg-white"
        />
        {checked && (
          <svg width="13" height="13" fill="none" className="pointer-events-none absolute" aria-hidden="true">
            <path d="M3 6l3 4 4-7" stroke="#555" strokeWidth="1.300" />
          </svg>
        )}
      </span>
      {label}
    </label>
  );
}

function AttributeView() {
  return (
    <section className="mt-[6px] flex h-[388px] shrink-0 flex-col border border-[#a5a5a5] px-[3px] pb-1 text-[#444]">
      <PanelHeader title="属性视图" className="h-[57px] pl-4 pr-[15px]" />
      <div className="flex h-[44px] shrink-0 items-center pl-[10px] text-[18px]">
        <Check label="只读" checked />
        <span className="w-[27px]" />
        <Check label="图属联动" checked />
        <span className="w-[27px]" />
        <Check label="单击跳转图元" />
        <span className="w-[30px]" />
        <Check label="仅显示选中" />
        <span className="ml-5 mr-[14px] h-[30px] w-px bg-[#c8c8c8]" />
        <button aria-label="刷新">
          <Svg>
            <path d="M4 12C4 6 9 3 14 5l3 3M20 12c0 6-5 9-10 7l-3-3" stroke="#35761a" strokeWidth="5" />
            <path d="M4 12C4 6 9 3 14 5l3 3M20 12c0 6-5 9-10 7l-3-3" stroke="#68b035" strokeWidth="3" />
            <path d="M22 1v11H12zM2 23V12h10z" fill="#4c9324" stroke="#35761a" />
          </Svg>
        </button>
        <span className="ml-[10px] mr-[14px] h-[30px] w-px bg-[#c8c8c8]" />
        <button aria-label="统计">
          <Svg size={25}>
            <path d="M1 19V2h20v9M1 19h5" stroke="#777" strokeWidth="1.500" fill="#fff" />
            <path d="M0 0h21v4H0z" fill="#777" />
            <path d="M2 9h18v6H2z" fill="#5cc6dc" />
            <path d="M2 8h19M8 4v4M14 4v4" stroke="#777" />
            <path d="M7 17h4v7H7z" fill="#84b637" />
            <path d="M13 11h5v13h-5z" fill="#ff7a70" stroke="#f0f0f0" />
            <path d="M19 15h5v9h-5z" fill="#4aa8f0" />
          </Svg>
        </button>
      </div>
      <div className="flex h-9 shrink-0">
        <div className="flex w-[113px] items-center justify-between border border-b-0 border-[#b8b8b8] pl-[17px] pr-[17px] text-[18px] text-[#222]">
          <button>output</button>
          <button aria-label="关闭output">
            <Cross size={9} color="#777" width={1.5} />
          </button>
        </div>
        <div className="flex-1 border-b border-[#b8b8b8]" />
      </div>
      <div className="min-h-0 flex-1 border-x border-b border-[#b8b8b8] p-px">
        <div className="relative h-full border-b border-l-2 border-r border-t-2 border-[#6e6e6e] border-b-white border-r-white pr-[27px]">
          <div className="h-[213px] overflow-hidden">
            <table className="w-[1386px] table-fixed border-separate border-spacing-0 font-['Noto_Sans','Noto_Sans_CJK_SC',sans-serif] text-[18px] font-normal leading-5 text-black">
              <thead>
                <tr>
                  {COLS.map((c) => (
                    <th key={c} className="h-[21px] overflow-hidden border-b border-r border-[#6e6e6e] p-0 font-semibold">
                      {c}
                    </th>
                  ))}
                </tr>
              </thead>
              <tbody>
                {ROWS.map(([id, use, zone, own, year]) => {
                  const on = id === 11;
                  const cell =
                    "h-[21px] border-b border-r border-[#7d7d7d] p-0 text-center " +
                    (on ? "bg-[#26ffff] text-[#f00]" : "bg-[#e6e6e6]");
                  return (
                    <tr key={id}>
                      <td className="h-[21px] border-b border-r border-[#7d7d7d] p-0 pl-[6px]">{id}</td>
                      <td className="h-[21px] border-b border-r border-[#7d7d7d] bg-[#e6e6e6] p-0 text-center">{id}</td>
                      <td className={cell}>{id}</td>
                      <td className={cell}>{"P0" + id}</td>
                      <td className={cell}>{use}</td>
                      <td className={cell}>{zone}</td>
                      <td className={cell}>{own}</td>
                      <td className={cell}>{year}</td>
                      <td className={cell}>四至坐标</td>
                    </tr>
                  );
                })}
              </tbody>
            </table>
          </div>
          <div className="absolute bottom-[9px] left-[26px] h-[6px] w-[497px] rounded-full bg-[#868686]" />
          <div className="absolute right-[10px] top-[98px] h-[74px] w-[5px] rounded-full bg-[#868686]" />
        </div>
      </div>
    </section>
  );
}

/* ---------- entity properties ---------- */

const PROPS = [
  ["OID", "11"],
  ["ID", "11"],
  ["PlotID", "P011"],
  ["LandUseType", "住宅区"],
  ["ZoneName", "幸福湾"],
  ["Owner", "私人"],
  ["SurveyYear", "2022"],
  ["CoordType", "四至坐标"],
  ["West", "100°11′00″"],
  ["East", "100°12′30″"],
  ["North", "20°15′30″"],
  ["South", "20°14′00″"],
  ["CRS", "WGS84"],
  ["Scale", "1/5000"],
  ["土地面积亩", "130"],
  ["绿化率", "33"],
  ["开发强度", "中"],
];

const isCjk = (s) => /[\u4e00-\u9fff]/.test(s);

function Value({ text }) {
  if (isCjk(text)) return text;
  return (
    <span className={"text-[15px] " + mono}>
      {text.split(/([°′″])/).map((p, i) =>
        /[°′″]/.test(p) ? (
          <span key={i} className="inline-block w-[18px]">
            {p}
          </span>
        ) : (
          p
        )
      )}
    </span>
  );
}

function Chevron({ down = false }) {
  return (
    <svg width="9" height="7" viewBox="0 0 9 7" fill="none" className={down ? "rotate-180" : ""} aria-hidden="true">
      <path d="M1 6l3.500-4L8 6" stroke="#666" strokeWidth="2" />
    </svg>
  );
}

function Properties() {
  return (
    <aside className="flex w-[713px] shrink-0 flex-col border border-[#a5a5a5] pb-1 text-[18px] text-[#444]">
      <PanelHeader title="图元属性" className="h-[56px] pl-[19px] pr-[19px]" />
      <div className="flex h-[41px] shrink-0 items-center pl-2 pr-[9px]">
        <label htmlFor="filter" className="w-[82px] whitespace-nowrap">
          图层过滤:
        </label>
        <div className="relative flex h-7 flex-1 border border-[#a5a5a5] bg-white">
          <svg width="10" height="16" className="ml-[5px] mt-[5px]" aria-hidden="true">
            <path d="M0 0v12l3-2 2 5h2L5 9h4z" fill="#222" />
          </svg>
          <select id="filter" className="w-0 flex-1 appearance-none pl-[11px] leading-[26px] outline-none">
            <option>当前选择集</option>
          </select>
          <span className="flex w-6 items-center justify-center border-l border-[#a5a5a5] bg-[#f0f0f0]">
            <Down />
          </span>
        </div>
        <button className="ml-2 flex h-6 w-[21px] items-center justify-center bg-white" aria-label="分栏">
          <svg width="11" height="11" fill="none" aria-hidden="true">
            <path d="M0.500 0.500h10v10h-10zM5.500 2v7" stroke="#000" />
          </svg>
        </button>
      </div>
      <div className="mx-[3px] mt-[7px] h-[466px] shrink-0 border border-[#a5a5a5] bg-white text-[#333]">
        <div className="h-8 border-b border-[#a5a5a5] bg-[#f0f0f0] pl-[7px] leading-[30px]">图元OID</div>
        <div className="flex h-[26px] items-center pl-[8px]">
          <Twisty />
          <span className="ml-[5px]">{I.map}</span>
          <span className="ml-[6px]">新地图1</span>
        </div>
        <div className="flex h-[26px] items-center pl-[26px]">
          <Twisty />
          <span className="ml-[5px]">{I.line}</span>
          <span className="ml-[7px]">output（选中1个图元）</span>
        </div>
        <div className="flex h-[26px] items-center pl-14">
          <span className="mr-1 h-[2px] w-3 bg-[#1e8fe8]" />
          <span className="flex-1 self-stretch bg-[#dadada] pl-[6px] leading-[26px] text-[#222]">11</span>
        </div>
      </div>
      <div className="flex h-[18px] shrink-0 items-center justify-center gap-[2px] pb-1">
        {[0, 1, 2, 3, 4].map((k) => (
          <span key={k} className="h-[2px] w-[2px] bg-[#555]" />
        ))}
      </div>
      <div className="mx-[3px] flex h-[36px] shrink-0">
        <button className="w-[73px] border border-b-0 border-[#b8b8b8]">属性</button>
        <div className="flex flex-1 items-center gap-[34px] border-b border-[#b8b8b8] pl-4 text-[#666]">
          {["参数", "空间范围", "坐标点", "解析几何坐标点"].map((t) => (
            <button key={t}>{t}</button>
          ))}
        </div>
      </div>
      <div className="mx-[3px] flex min-h-0 flex-1 flex-col border border-b-2 border-t-0 border-[#b8b8b8] border-b-[#a5a5a5] pl-[13px] pr-[10px] pt-[14px]">
        <div className="flex min-h-0 flex-1 border border-l-2 border-t-2 border-[#a5a5a5] bg-white">
          <div className="flex-1 overflow-hidden">
            <table className="w-full table-fixed border-separate border-spacing-0">
              <tbody>
                {PROPS.map(([k, v], i) => (
                  <tr key={k} className={i === 0 ? "text-[#999]" : ""}>
                    <th
                      scope="row"
                      className="w-[229px] border-b border-r border-[#c8c8c8] bg-[#f0f0f0] p-0 pl-[20px] text-left font-normal"
                    >
                      <div className={isCjk(k) ? "h-[26px] font-light leading-[26px]" : "h-[26px] leading-[26px]"}>
                        {k}
                      </div>
                    </th>
                    <td className="border-b border-[#c8c8c8] p-0 pl-[5px]">
                      <div className="flex h-[26px] items-center leading-[26px]">
                        <Value text={v} />
                      </div>
                    </td>
                  </tr>
                ))}
              </tbody>
            </table>
          </div>
          <div className="flex w-[27px] flex-col border-l border-[#a5a5a5] bg-[#ececec]">
            <button className="flex h-[25px] items-center justify-center" aria-label="向上滚动">
              <Chevron />
            </button>
            <div className="h-[358px] bg-[#cdcdcd]" />
            <button className="mb-[9px] mt-auto flex justify-center" aria-label="向下滚动">
              <Chevron down />
            </button>
          </div>
        </div>
        <div className="mt-[5px] h-[94px] shrink-0 border border-[#a5a5a5] bg-[#ffffe1] pt-[8px] text-black">
          <div className="pl-[11px] font-bold leading-5">OID</div>
          <div className="flex gap-2 pl-[5px] pt-[7px] leading-[21px]">
            <svg width="16" height="18" viewBox="0 0 16 18" fill="none" className="mt-[2px]" aria-hidden="true">
              <circle cx="8" cy="8" r="7" fill="#fff4e8" stroke="#e06a1c" strokeWidth="1.500" />
              <path d="M9 3L7 9" stroke="#d2451e" strokeWidth="2.500" />
              <circle cx="7" cy="12" r="1.500" fill="#d2451e" />
              <path d="M10 14l4 3V12z" fill="#e06a1c" />
            </svg>
            <div>
              <div className="h-[21px]">
                字段类型：<span className={"text-[15px] " + mono}>64</span>位长整型
              </div>
              <div className="h-[21px]">允许空：否</div>
            </div>
          </div>
        </div>
        <div className="flex h-[34px] shrink-0 items-center pt-[6px] text-[#666]">
          <Check label="启用编辑" />
        </div>
      </div>
      <div className="flex h-[38px] shrink-0 pl-[10px] text-[#444]">
        <button className="flex items-center gap-1 pl-1">
          <Svg size={16} box={16}>
            <path d="M1 2h8v12H1z" fill="#f0b53a" stroke="#a86e10" />
            <path d="M5 4h5v4H5z" fill="#4fae3a" />
            <path d="M8 7h3v8H8z" fill="#fff" stroke="#777" />
            <path d="M11 9h4M11 13h4" stroke="#1e78d8" strokeWidth="2.500" />
          </Svg>
          GDBCatalog
        </button>
        <button className="ml-4 flex items-center gap-1">
          <Svg size={17} box={16}>
            <path d="M1 1h12v13H1z" fill="#e8eef8" stroke="#8a97b8" />
            <path d="M6 6l8 8" stroke="#5a6a98" strokeWidth="3" />
            <circle cx="5" cy="5" r="2.500" stroke="#5a6a98" strokeWidth="1.500" />
          </Svg>
          工具箱
        </button>
        <button className="ml-[10px] flex items-center gap-[5px] bg-[#d9d9d9] pl-[7px] pr-[9px]">
          <Svg size={16} box={16}>
            <path d="M1 1h12v13H1z" fill="#d4e8fa" stroke="#2d6fc0" strokeWidth="1.500" />
            <circle cx="8" cy="8" r="3.500" fill="#fff" stroke="#4a7ab0" />
            <path d="M11 11l4 4" stroke="#f08a20" strokeWidth="2" />
          </Svg>
          图元属性
        </button>
      </div>
    </aside>
  );
}

/* ---------- dialog ---------- */

function Radio({ label, checked = false }) {
  return (
    <label className="flex items-center gap-[3px] whitespace-nowrap">
      <input
        type="radio"
        name="target"
        defaultChecked={checked}
        className="h-[13px] w-[13px] appearance-none rounded-full border border-[#a5a5a5] bg-white checked:bg-[#555] checked:shadow-[inset_0_0_0_2px_white]"
      />
      <span className={checked ? "border border-dotted border-black px-px leading-[22px]" : "px-[2px] leading-[24px]"}>
        {label}
      </span>
    </label>
  );
}

function Dialog() {
  return (
    <div
      role="dialog"
      aria-label="线拓扑造区"
      className="absolute left-[912px] top-[486px] flex w-[564px] flex-col rounded-[10px] border-2 border-[#adadad] bg-[#f0f0f0] pb-[18px] text-[18px] text-[#444] shadow-[0_34px_60px_4px_rgba(0,0,0,0.42),0_0_34px_rgba(0,0,0,0.18)]"
    >
      <div className="flex h-[35px] items-center justify-between rounded-t-[8px] bg-[#eaf5f8] pb-[2px] pl-1 pr-[15px] text-black">
        <h2 className="font-normal">线拓扑造区</h2>
        <button aria-label="关闭对话框">
          <Cross size={18} color="#111" width={1} />
        </button>
      </div>
      <fieldset className="mx-[17px] mt-[20px] h-[128px] border border-[#bcbcbc] pl-[13px] pr-[10px]">
        <legend className="-ml-px px-[6px] leading-[30px]">图层</legend>
        <div className="flex h-[48px] items-center pt-[10px]">
          <Radio label="新建图层" checked />
        </div>
        <div className="flex h-[39px] items-center">
          <Radio label="保存到现有图层中" />
          <div className="ml-auto flex h-7 w-[324px] border border-[#a5a5a5] text-[#bbb]">
            <span className="flex w-6 items-center justify-center border-r border-[#d0d0d0]">
              <svg width="16" height="16" fill="none" aria-hidden="true">
                <path d="M4.500 0.500h10v14h-14v-10z" fill="#e2e2e2" stroke="#a5a5a5" />
                <path d="M4.500 0.500v4h-4" stroke="#a5a5a5" />
              </svg>
            </span>
            <select disabled aria-label="现有图层" className="w-0 flex-1 appearance-none">
              <option></option>
            </select>
            <span className="flex w-6 items-center justify-center border-l border-[#d0d0d0]">
              <Down className="text-[#bbb]" />
            </span>
          </div>
        </div>
      </fieldset>
      <fieldset className="mx-[17px] mt-3 h-[94px] border border-[#bcbcbc] pl-[11px] pr-[10px]">
        <legend className="px-[6px] leading-[30px]">参数设置</legend>
        <div className="flex h-[54px] items-center">
          <label htmlFor="tol" className="w-[59px]">
            容差：
          </label>
          <input
            id="tol"
            defaultValue="0.0001"
            className="h-7 w-0 flex-1 border border-[#a5a5a5] bg-white pl-1 font-normal text-[#333] outline-none"
          />
        </div>
      </fieldset>
      <div className="mt-[14px] flex justify-end gap-[9px] pr-[17px]">
        <button className="h-9 w-[107px] border border-[#444]">确定</button>
        <button className="h-9 w-[107px] border border-[#a5a5a5]">取消</button>
      </div>
    </div>
  );
}

export default function App() {
  return (
    <div className="relative flex h-screen flex-col overflow-hidden bg-[#f0f0f0] font-['DejaVu_Sans_Condensed','Noto_Sans','Noto_Sans_CJK_SC',sans-serif] font-light">
      <TitleBar />
      <Ribbon />
      <main className="flex min-h-0 flex-1 gap-[6px] px-[2px] pb-px pt-[2px]">
        <Workspace />
        <div className="flex min-w-0 flex-1 flex-col pt-[2px]">
          <MapView />
          <AttributeView />
        </div>
        <Properties />
      </main>
      <footer className="flex h-[30px] shrink-0 items-center justify-end border-t border-[#bcbcbc] pr-2 pt-[5px] text-[18px] text-[#444]">
        x=100.38, y=20.45(度)
      </footer>
      <Dialog />
    </div>
  );
}
